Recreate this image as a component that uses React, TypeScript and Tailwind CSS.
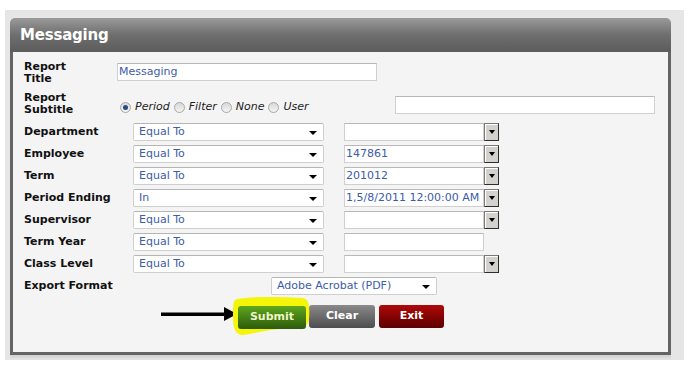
import React from "react";

const font = { fontFamily: '"DejaVu Sans", Verdana, sans-serif' };

const SelectBox = ({ value, width }: { value: string; width: string }) => (
    <div className={`relative h-[18px] ${width} bg-white border border-[#cfcfcf] border-t-[#b5b5b5] rounded-[2px] flex items-center pl-[5px] text-[11px] text-[#3d5ca8]`}>
        {value}
        <span className="absolute right-[6px] top-[7px] w-0 h-0 border-l-[4px] border-r-[4px] border-t-[4px] border-l-transparent border-r-transparent border-t-black" />
    </div>
);

const TextBox = ({ value = "", width }: { value?: string; width: string }) => (
    <div className={`h-[18px] ${width} bg-white border border-[#d0d0d0] border-t-[#b8b8b8] flex items-center pl-[1px] text-[11px] text-[#3d5ca8] overflow-hidden whitespace-nowrap`}>
        {value}
    </div>
);

const DropButton = () => (
    <div className="h-[18px] w-[15px] bg-[#d4d2cc] border border-[#2e2e2e] border-t-[#7a7a7a] border-l-[#7a7a7a] flex items-center justify-center shadow-[inset_1px_1px_0_#fff]">
        <span className="w-0 h-0 border-l-[3px] border-r-[3px] border-t-[4px] border-l-transparent border-r-transparent border-t-black" />
    </div>
);

const Radio = ({ checked, label }: { checked?: boolean; label: string }) => (
    <div className="flex items-center">
        <span className="w-[11px] h-[11px] rounded-full border border-[#a8a8a8] bg-gradient-to-b from-[#d8d8d8] to-[#f4f4f4] flex items-center justify-center">
            {checked && <span className="w-[5px] h-[5px] rounded-full bg-[#2b4a80]" />}
        </span>
        <span className="ml-[4px] mr-[4px] italic text-[11px] text-[#222]">{label}</span>
    </div>
);

interface FilterRow {
    label: string
    op: string
    value: string
    drop: boolean
}

const rows: FilterRow[] = [
    { label: "Department", op: "Equal To", value: "", drop: true },
    { label: "Employee", op: "Equal To", value: "147861", drop: true },
    { label: "Term", op: "Equal To", value: "201012", drop: true },
    { label: "Period Ending", op: "In", value: "1,5/8/2011 12:00:00 AM", drop: true },
    { label: "Supervisor", op: "Equal To", value: "", drop: true },
    { label: "Term Year", op: "Equal To", value: "", drop: false },
    { label: "Class Level", op: "Equal To", value: "", drop: true },
];

const App: React.FunctionComponent = () => {
    return (
        <div className="w-[690px] h-[374px] bg-white overflow-hidden" style={font}>
            <div className="ml-[5px] mt-[10px] w-[679px] h-[350px] bg-[#e6e6e6] pt-[8px] pl-[5px]">
                <div className="w-[661px]">
                    {/* header */}
                    <div className="h-[34px] rounded-t-[5px] bg-gradient-to-b from-[#9a9a9a] via-[#6e6e6e] to-[#5c5c5c] flex items-center pl-[10px]">
                        <span className="text-white font-bold text-[15px] tracking-[-0.2px]">Messaging</span>
                    </div>

                    {/* body */}
                    <div className="h-[303px] bg-[#f4f4f4] border-l-[3px] border-r-[3px] border-b-[3px] border-[#646464] pl-[11px] pt-[8px]">
                        <div className="flex items-start h-[26px]">
                            <div className="w-[93px] text-[11px] font-bold leading-[12px] text-[#111] pt-[1px]">Report<br />Title</div>
                            <div className="mt-[3px]"><TextBox value="Messaging" width="w-[260px]" /></div>
                        </div>

                        <div className="flex items-start h-[29px] mt-[6px]">
                            <div className="w-[96px] text-[11px] font-bold leading-[12px] text-[#111]">Report<br />Subtitle</div>
                            <div className="flex items-center mt-[7px] w-[275px]">
                                <Radio checked label="Period" />
                                <Radio label="Filter" />
                                <Radio label="None" />
                                <Radio label="User" />
                            </div>
                            <div className="mt-[4px]"><TextBox width="w-[260px]" /></div>
                        </div>

                        {rows.map((row) => (
                            <div className="flex items-center h-[22px]" key={row.label}>
                                <div className="w-[109px] text-[11px] font-bold text-[#111]">{row.label}</div>
                                <SelectBox value={row.op} width="w-[191px]" />
                                <div className="ml-[20px]"><TextBox value={row.value} width="w-[140px]" /></div>
                                {row.drop && <DropButton />}
                            </div>
                        ))}

                        <div className="flex items-center h-[22px]">
                            <div className="w-[247px] text-[11px] font-bold text-[#111]">Export Format</div>
                            <SelectBox value="Adobe Acrobat (PDF)" width="w-[166px]" />
                        </div>

                        <div className="flex items-center mt-[7px] h-[24px]">
                            <svg width="214" height="20" viewBox="0 0 214 20" className="shrink-0">
                                <rect x="137" y="6.5" width="66" height="3.5" fill="#000" />
                                <polygon points="200,1 213,8 200,15" fill="#000" />
                            </svg>
                            <div className="relative">
                                <svg width="82" height="42" viewBox="0 0 82 42" className="absolute left-[-7px] top-[-8px]">
                                    <path d="M6 4 C20 1 55 2 72 3 C78 4 79 12 78 24 C77 31 74 33 60 33 C40 34 26 38 12 40 C5 40 2 34 2 22 C2 10 2 5 6 4 Z" fill="#f5f50a" />
                                </svg>
                                <button className="relative w-[68px] h-[23px] rounded-[3px] bg-gradient-to-b from-[#5ea81c] to-[#2e5a0c] text-[#eef5c8] text-[11px] font-bold">Submit</button>
                            </div>
                            <button className="ml-[3px] w-[66px] h-[23px] rounded-[3px] bg-gradient-to-b from-[#8a8a8a] to-[#4e4e4e] text-white text-[11px] font-bold">Clear</button>
                            <button className="ml-[4px] w-[65px] h-[23px] rounded-[3px] bg-gradient-to-b from-[#b00a0a] to-[#5e0000] text-white text-[11px] font-bold">Exit</button>
                        </div>
                    </div>
                    <div className="h-[5px] bg-gradient-to-b from-[#cfcfcf] to-[#e6e6e6]" />
                </div>
            </div>
        </div>
    );
};

export default App;
